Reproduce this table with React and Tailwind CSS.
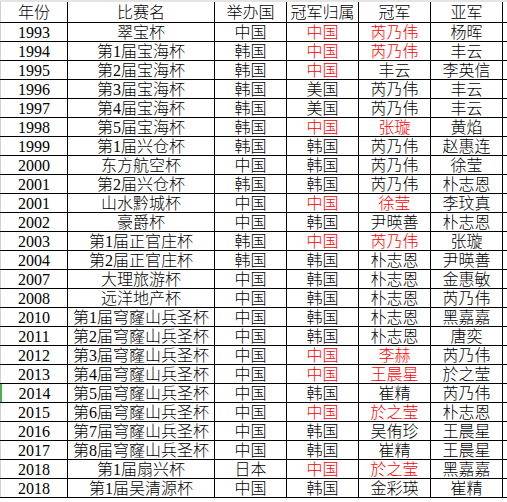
const rows = [
  ["1993", "翠宝杯", "中国", "中国", "芮乃伟", "杨晖", true, true],
  ["1994", "第1届宝海杯", "韩国", "中国", "芮乃伟", "丰云", true, true],
  ["1995", "第2届宝海杯", "韩国", "中国", "丰云", "李英信", true, false],
  ["1996", "第3届宝海杯", "韩国", "美国", "芮乃伟", "丰云", false, false],
  ["1997", "第4届宝海杯", "韩国", "美国", "芮乃伟", "丰云", false, false],
  ["1998", "第5届宝海杯", "韩国", "中国", "张璇", "黄焰", true, true],
  ["1999", "第1届兴仓杯", "韩国", "韩国", "芮乃伟", "赵惠连", false, false],
  ["2000", "东方航空杯", "中国", "韩国", "芮乃伟", "徐莹", false, false],
  ["2001", "第2届兴仓杯", "韩国", "韩国", "芮乃伟", "朴志恩", false, false],
  ["2001", "山水黔城杯", "中国", "中国", "徐莹", "李玟真", true, true],
  ["2002", "豪爵杯", "中国", "韩国", "尹暎善", "朴志恩", false, false],
  ["2003", "第1届正官庄杯", "韩国", "中国", "芮乃伟", "张璇", true, true],
  ["2004", "第2届正官庄杯", "韩国", "韩国", "朴志恩", "尹暎善", false, false],
  ["2007", "大理旅游杯", "中国", "韩国", "朴志恩", "金惠敏", false, false],
  ["2008", "远洋地产杯", "中国", "韩国", "朴志恩", "芮乃伟", false, false],
  ["2010", "第1届穹窿山兵圣杯", "中国", "韩国", "朴志恩", "黑嘉嘉", false, false],
  ["2011", "第2届穹窿山兵圣杯", "中国", "韩国", "朴志恩", "唐奕", false, false],
  ["2012", "第3届穹窿山兵圣杯", "中国", "中国", "李赫", "芮乃伟", true, true],
  ["2013", "第4届穹窿山兵圣杯", "中国", "中国", "王晨星", "於之莹", true, true],
  ["2014", "第5届穹窿山兵圣杯", "中国", "韩国", "崔精", "芮乃伟", false, false],
  ["2015", "第6届穹窿山兵圣杯", "中国", "中国", "於之莹", "朴志恩", true, true],
  ["2016", "第7届穹窿山兵圣杯", "中国", "韩国", "吴侑珍", "王晨星", false, false],
  ["2017", "第8届穹窿山兵圣杯", "中国", "韩国", "崔精", "王晨星", false, false],
  ["2018", "第1届扇兴杯", "日本", "中国", "於之莹", "黑嘉嘉", true, true],
  ["2018", "第1届吴清源杯", "中国", "韩国", "金彩瑛", "崔精", false, false],
];

const widths = ["w-[68px]", "w-[147px]", "w-[72px]", "w-[72px]", "w-[72px]", "w-[72px]"];

const Cell = ({ w, red, first, mark, children }) => {
  return (
    <div
      className={`${w} h-full shrink-0 flex items-center justify-center border-r border-black pt-[2px] ${
        red ? "text-[#f00]" : "text-black"
      } ${first ? (mark ? "border-l-2 border-l-[#4caf50]" : "border-l border-l-[#d0d0d0]") : ""}`}
    >
      {children}
    </div>
  );
};

const App = () => {
  return (
    <div
      className="w-[507px] h-[502px] bg-white overflow-hidden text-[16px] leading-none font-light"
      style={{ fontFamily: '"Liberation Serif", "Noto Sans CJK SC", serif' }}
    >
      <div className="h-[2px] bg-[#e4e4e4]"></div>
      <div className="flex h-[21px] border-b border-black">
        {["年份", "比赛名", "举办国", "冠军归属", "冠军", "亚军"].map((t, i) => (
          <Cell key={i} w={widths[i]} first={i === 0}>
            {t}
          </Cell>
        ))}
      </div>
      {rows.map((r, idx) => (
        <div key={idx} className="flex h-[19px] border-b border-black">
          {r.slice(0, 6).map((t, i) => (
            <Cell
              key={i}
              w={widths[i]}
              first={i === 0}
              mark={idx === 19}
              red={(i === 3 && r[6]) || (i === 4 && r[7])}
            >
              {t}
            </Cell>
          ))}
        </div>
      ))}
      <div className="h-[5px] border-b border-[#e4e4e4]"></div>
    </div>
  );
};

export default App;
